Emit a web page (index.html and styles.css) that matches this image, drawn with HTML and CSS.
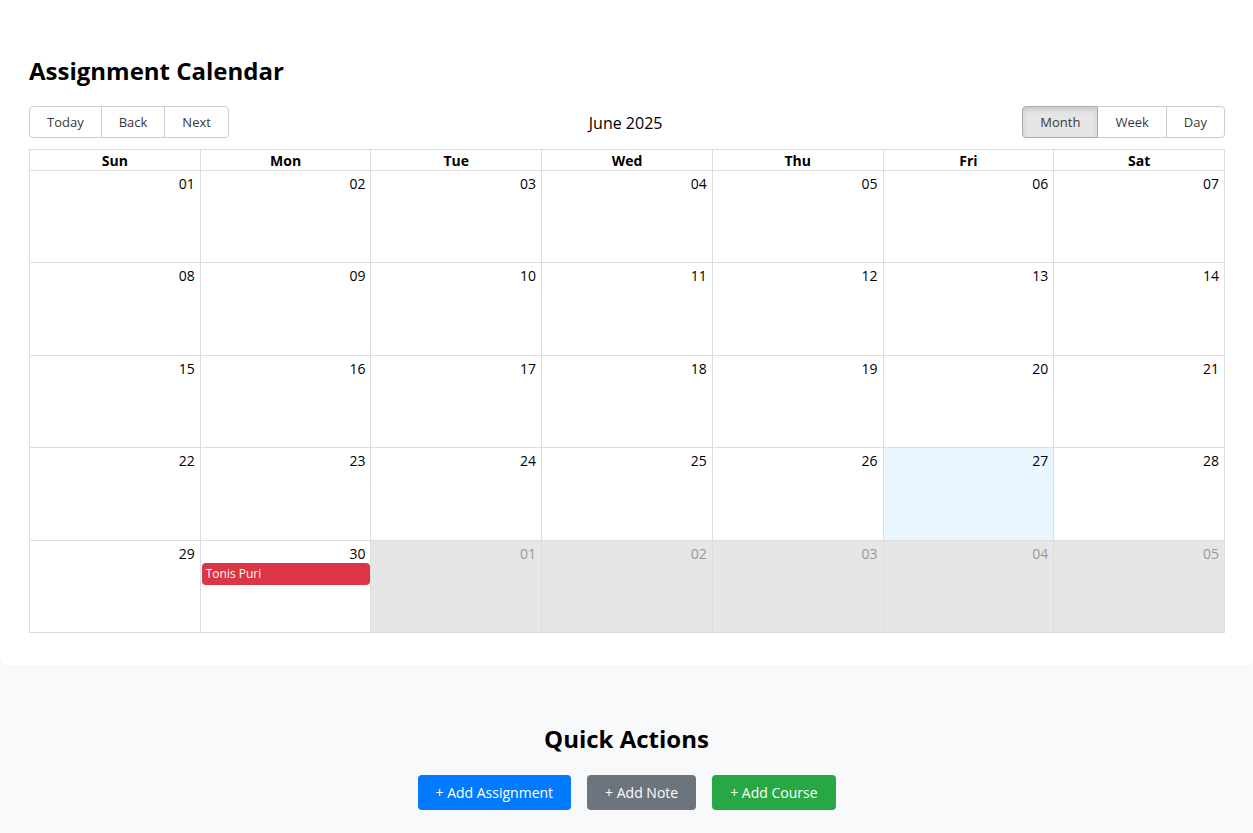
FILE: index.html
```html
<!DOCTYPE html>
<html lang="en">
<head>
<meta charset="utf-8">
<meta name="viewport" content="width=device-width, initial-scale=1">
<title>Assignment Calendar</title>
<link rel="stylesheet" href="styles.css">
</head>
<body>
<main>
  <section class="calendar-card">
    <h2 class="section-title">Assignment Calendar</h2>
    <div class="toolbar">
      <div class="btn-group">
        <button type="button">Today</button>
        <button type="button">Back</button>
        <button type="button">Next</button>
      </div>
      <span class="toolbar-label">June 2025</span>
      <div class="btn-group">
        <button type="button" class="active" aria-pressed="true">Month</button>
        <button type="button">Week</button>
        <button type="button">Day</button>
      </div>
    </div>
    <table class="month">
      <thead>
        <tr><th scope="col">Sun</th><th scope="col">Mon</th><th scope="col">Tue</th><th scope="col">Wed</th><th scope="col">Thu</th><th scope="col">Fri</th><th scope="col">Sat</th></tr>
      </thead>
      <tbody>
        <tr><td>01</td><td>02</td><td>03</td><td>04</td><td>05</td><td>06</td><td>07</td></tr>
        <tr><td>08</td><td>09</td><td>10</td><td>11</td><td>12</td><td>13</td><td>14</td></tr>
        <tr><td>15</td><td>16</td><td>17</td><td>18</td><td>19</td><td>20</td><td>21</td></tr>
        <tr><td>22</td><td>23</td><td>24</td><td>25</td><td>26</td><td class="today">27</td><td>28</td></tr>
        <tr><td>29</td><td>30<button type="button" class="event">Tonis Puri</button></td><td class="off">01</td><td class="off">02</td><td class="off">03</td><td class="off">04</td><td class="off">05</td></tr>
      </tbody>
    </table>
  </section>
  <section class="quick-actions">
    <h2 class="section-title">Quick Actions</h2>
    <div class="actions">
      <button type="button" class="action primary">+ Add Assignment</button>
      <button type="button" class="action secondary">+ Add Note</button>
      <button type="button" class="action success">+ Add Course</button>
    </div>
  </section>
</main>
</body>
</html>
```
FILE: styles.css
```css
* {
  box-sizing: border-box;
}

body {
  margin: 0;
  background: #f8f9fb;
  color: #000;
  font-family: "Segoe UI", "Open Sans", "Noto Sans", sans-serif;
  font-size: 16px;
}

button {
  font-family: inherit;
  cursor: pointer;
}

.calendar-card {
  padding: 54px 28px 33px 29px;
  background: #fff;
  border-radius: 0 0 8px 8px;
  box-shadow: 0 0 2px rgba(0, 0, 0, 0.04);
}

.section-title {
  margin: 0;
  font-size: 24px;
  font-weight: 700;
  line-height: 34px;
}

.toolbar {
  display: flex;
  flex-wrap: wrap;
  align-items: center;
  margin: 18px 0 11px;
}

.toolbar-label {
  flex: 1;
  padding-top: 2px;
  line-height: 24px;
  text-align: center;
}

.btn-group {
  display: flex;
}

.btn-group button {
  height: 32px;
  padding: 0 17px;
  border: 1px solid #ccc;
  background: #fff;
  color: #373a3c;
  font-size: 13px;
}

.btn-group button + button {
  margin-left: -1px;
}

.btn-group button:first-child {
  border-radius: 4px 0 0 4px;
}

.btn-group button:last-child {
  border-radius: 0 4px 4px 0;
}

.btn-group .active {
  z-index: 1;
  border-color: #adadad;
  background: #e6e6e6;
  box-shadow: inset 0 3px 5px rgba(0, 0, 0, 0.125);
}

.month {
  width: 100%;
  height: 484px;
  table-layout: fixed;
  border-collapse: collapse;
}

.month th,
.month td {
  border: 1px solid #ddd;
}

.month th {
  height: 21px;
  padding: 1px 0 0;
  font-size: 14px;
  line-height: 19px;
}

.month td {
  height: 92px;
  padding: 3px 5px 0 1px;
  font-size: 14px;
  line-height: 20px;
  text-align: right;
  vertical-align: top;
}

.month .today {
  background: #eaf6ff;
}

.month .off {
  background: #e6e6e6;
  color: #999;
}

.event {
  display: block;
  width: calc(100% + 5px);
  height: 22px;
  margin-top: -1px;
  padding: 0 4px;
  border: 0;
  border-radius: 4px;
  background: #dc3545;
  color: #fff;
  font-size: 12px;
  text-align: left;
}

.quick-actions {
  padding: 56px 16px 23px;
  text-align: center;
}

.actions {
  display: flex;
  flex-wrap: wrap;
  justify-content: center;
  gap: 16px;
  margin-top: 19px;
}

.action {
  height: 35px;
  padding: 0 18px;
  border: 0;
  border-radius: 4px;
  color: #fff;
  font-size: 14px;
}

.primary {
  background: #007bff;
}

.secondary {
  background: #6c757d;
}

.success {
  background: #28a745;
}
```
